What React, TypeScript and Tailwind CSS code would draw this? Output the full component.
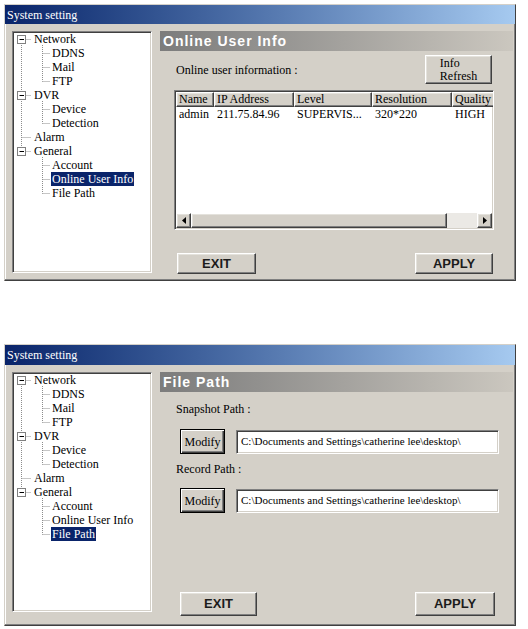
import React from 'react';

const SERIF = "font-['Liberation_Serif','Times_New_Roman',serif]";
const SANS = "font-['Liberation_Sans',Arial,sans-serif]";

const raised =
  'border border-t-white border-l-white border-r-[#404040] border-b-[#404040] shadow-[inset_-1px_-1px_#808080,inset_1px_1px_#e4e2dc]';
const sunken =
  'border border-t-[#808080] border-l-[#808080] border-r-white border-b-white shadow-[inset_1px_1px_#404040,inset_-1px_-1px_#d4d0c8]';

type Item = { label: string; level: 0 | 1; box?: boolean };

const items: Item[] = [
  { label: 'Network', level: 0, box: true },
  { label: 'DDNS', level: 1 },
  { label: 'Mail', level: 1 },
  { label: 'FTP', level: 1 },
  { label: 'DVR', level: 0, box: true },
  { label: 'Device', level: 1 },
  { label: 'Detection', level: 1 },
  { label: 'Alarm', level: 0 },
  { label: 'General', level: 0, box: true },
  { label: 'Account', level: 1 },
  { label: 'Online User Info', level: 1 },
  { label: 'File Path', level: 1 },
];

const ROW = 14;
const cy = (i: number) => 7 + ROW * i;

function TreeLines() {
  const line = { stroke: '#8c8c8c', strokeWidth: 1, strokeDasharray: '1 1' };
  const groups = [
    [0, 1, 3],
    [4, 5, 6],
    [8, 9, 11],
  ];
  return (
    <svg className="absolute inset-0" width="138" height="240">
      {/* root spine */}
      <line x1="8.5" y1={cy(0)} x2="8.5" y2={cy(8)} {...line} />
      {items.map((it, i) =>
        it.level === 0 ? <line key={'h' + i} x1="8.5" y1={cy(i) + 0.5} x2="18" y2={cy(i) + 0.5} {...line} /> : null,
      )}
      {groups.map(([p, first, last]) => (
        <g key={p}>
          <line x1="29.5" y1={cy(p) + 6} x2="29.5" y2={cy(last) + 0.5} {...line} />
          {Array.from({ length: last - first + 1 }, (_, k) => first + k).map((i) => (
            <line key={i} x1="29.5" y1={cy(i) + 0.5} x2="37" y2={cy(i) + 0.5} {...line} />
          ))}
        </g>
      ))}
      {items.map((it, i) =>
        it.box ? (
          <g key={'b' + i}>
            <rect x="4.5" y={cy(i) - 3.5} width="8" height="8" fill="white" stroke="#808080" />
            <line x1="6.5" y1={cy(i) + 0.5} x2="11" y2={cy(i) + 0.5} stroke="#000" />
          </g>
        ) : null,
      )}
    </svg>
  );
}

function Tree({ selected, height }: { selected: string; height: string }) {
  return (
    <div className={`relative w-[140px] shrink-0 bg-white ${height} ${sunken}`}>
      <TreeLines />
      <div className={`relative ${SERIF} text-[12px] text-black`}>
        {items.map((it) => (
          <div
            key={it.label}
            className={`flex h-[14px] items-center leading-[14px] ${it.level === 0 ? 'pl-[20px]' : 'pl-[38px]'}`}
          >
            <span className={`px-[1px] ${it.label === selected ? 'bg-[#0a246a] text-white' : ''}`}>{it.label}</span>
          </div>
        ))}
      </div>
    </div>
  );
}

function Window({
  title,
  titleH,
  body,
  children,
}: {
  title: string;
  titleH: string;
  body: string;
  children: React.ReactNode;
}) {
  return (
    <div className="ml-[4px] w-[512px] border border-t-[#d4d0c8] border-l-[#d4d0c8] border-r-[#404040] border-b-[#404040] bg-[#d4d0c8] shadow-[inset_-1px_-1px_#808080,inset_1px_1px_#ffffff]">
      <div
        className={`flex items-center bg-gradient-to-r from-[#0a246a] to-[#a6caf0] pl-[2px] ${titleH} ${SERIF} text-[12px] text-white`}
      >
        {title}
      </div>
      <div className={`flex pl-[7px] pr-[2px] ${body}`}>{children}</div>
    </div>
  );
}

function PaneHeader({ text }: { text: string }) {
  return (
    <div
      className={`flex h-[20px] items-center bg-gradient-to-r from-[#7c7c7c] to-[#cbc7bf] pl-[3px] ${SANS} text-[14px] font-bold tracking-[1px] text-white`}
    >
      {text}
    </div>
  );
}

function BigButton({ label, w, h }: { label: string; w: string; h: string }) {
  return (
    <div
      className={`flex items-center justify-center bg-[#d4d0c8] ${w} ${h} ${raised} ${SANS} text-[13px] font-bold text-[#1c1c1c]`}
    >
      {label}
    </div>
  );
}

function Triangle({ dir }: { dir: 'l' | 'r' }) {
  return (
    <svg width="4" height="7" viewBox="0 0 4 7">
      {dir === 'l' ? <path d="M4 0 L0 3.5 L4 7 Z" fill="#000" /> : <path d="M0 0 L4 3.5 L0 7 Z" fill="#000" />}
    </svg>
  );
}

const cols = [
  { name: 'Name', w: 'w-[38px]', v: 'admin' },
  { name: 'IP Address', w: 'w-[80px]', v: '211.75.84.96' },
  { name: 'Level', w: 'w-[78px]', v: 'SUPERVIS...' },
  { name: 'Resolution', w: 'w-[80px]', v: '320*220' },
  { name: 'Quality', w: 'w-[44px]', v: 'HIGH' },
];

function UserList() {
  return (
    <div className={`ml-[14px] mt-[6px] flex h-[140px] w-[320px] flex-col overflow-hidden bg-white p-[1px] ${sunken}`}>
      <div className={`flex h-[15px] shrink-0 ${SERIF} text-[12px] leading-[13px] text-black`}>
        {cols.map((c) => (
          <div key={c.name} className={`shrink-0 overflow-hidden whitespace-nowrap bg-[#d4d0c8] pl-[2px] ${c.w} ${raised}`}>
            {c.name}
          </div>
        ))}
      </div>
      <div className={`flex h-[14px] shrink-0 ${SERIF} text-[12px] leading-[14px] text-black`}>
        {cols.map((c) => (
          <div key={c.name} className={`shrink-0 whitespace-nowrap pl-[3px] ${c.w}`}>
            {c.v}
          </div>
        ))}
      </div>
      <div className="flex-1" />
      <div className="flex h-[15px] shrink-0">
        <div className={`flex w-[15px] items-center justify-center bg-[#d4d0c8] ${raised}`}>
          <Triangle dir="l" />
        </div>
        <div className={`w-[256px] bg-[#d4d0c8] ${raised}`} />
        <div className="flex-1 bg-[#ebe9e5]" />
        <div className={`flex w-[15px] items-center justify-center bg-[#d4d0c8] ${raised}`}>
          <Triangle dir="r" />
        </div>
      </div>
    </div>
  );
}

function ModifyButton() {
  return (
    <div
      className={`flex h-[25px] w-[45px] shrink-0 items-center justify-center border border-black bg-[#d4d0c8] shadow-[inset_1px_1px_#ffffff,inset_-1px_-1px_#404040,inset_-2px_-2px_#808080] ${SERIF} text-[12px] text-black`}
    >
      Modify
    </div>
  );
}

function PathField() {
  return (
    <div
      className={`ml-[11px] flex h-[24px] w-[263px] items-center bg-white pl-[4px] ${sunken} ${SERIF} text-[11px] whitespace-nowrap text-black`}
    >
      {'C:\\Documents and Settings\\catherine lee\\desktop\\'}
    </div>
  );
}

export default function App() {
  return (
    <div className="min-h-[629px] w-[528px] bg-white pt-[4px]">
      {/* Online User Info window */}
      <Window title="System setting" titleH="h-[19px]" body="pt-[7px] pb-[6px]">
        <Tree selected="Online User Info" height="h-[242px]" />
        <div className="ml-[8px] flex flex-1 flex-col">
          <PaneHeader text="Online User Info" />
          <div className="mt-[4px] flex items-center justify-between pl-[16px] pr-[21px]">
            <span className={`${SERIF} text-[12px] text-black`}>Online user information :</span>
            <div
              className={`flex h-[29px] w-[67px] items-center justify-center bg-[#d4d0c8] ${raised} ${SERIF} text-[12px] leading-[13px] text-black`}
            >
              <span className="inline-block text-left">
                Info
                <br />
                Refresh
              </span>
            </div>
          </div>
          <UserList />
          <div className="mt-[23px] flex justify-between pl-[17px] pr-[20px]">
            <BigButton label="EXIT" w="w-[79px]" h="h-[21px]" />
            <BigButton label="APPLY" w="w-[78px]" h="h-[21px]" />
          </div>
        </div>
      </Window>

      <div className="h-[63px]" />

      {/* File Path window */}
      <Window title="System setting" titleH="h-[20px]" body="pt-[7px] pb-[9px]">
        <Tree selected="File Path" height="h-[240px]" />
        <div className="ml-[8px] flex flex-1 flex-col">
          <PaneHeader text="File Path" />
          <div className={`mt-[10px] pl-[16px] ${SERIF} text-[12px] leading-[14px] text-black`}>Snapshot Path :</div>
          <div className="mt-[13px] flex items-center pl-[20px]">
            <ModifyButton />
            <PathField />
          </div>
          <div className={`mt-[8px] pl-[16px] ${SERIF} text-[12px] leading-[14px] text-black`}>Record Path :</div>
          <div className="mt-[12px] flex items-center pl-[20px]">
            <ModifyButton />
            <PathField />
          </div>
          <div className="mt-[79px] flex justify-between pl-[20px] pr-[18px]">
            <BigButton label="EXIT" w="w-[77px]" h="h-[24px]" />
            <BigButton label="APPLY" w="w-[80px]" h="h-[24px]" />
          </div>
        </div>
      </Window>
    </div>
  );
}
